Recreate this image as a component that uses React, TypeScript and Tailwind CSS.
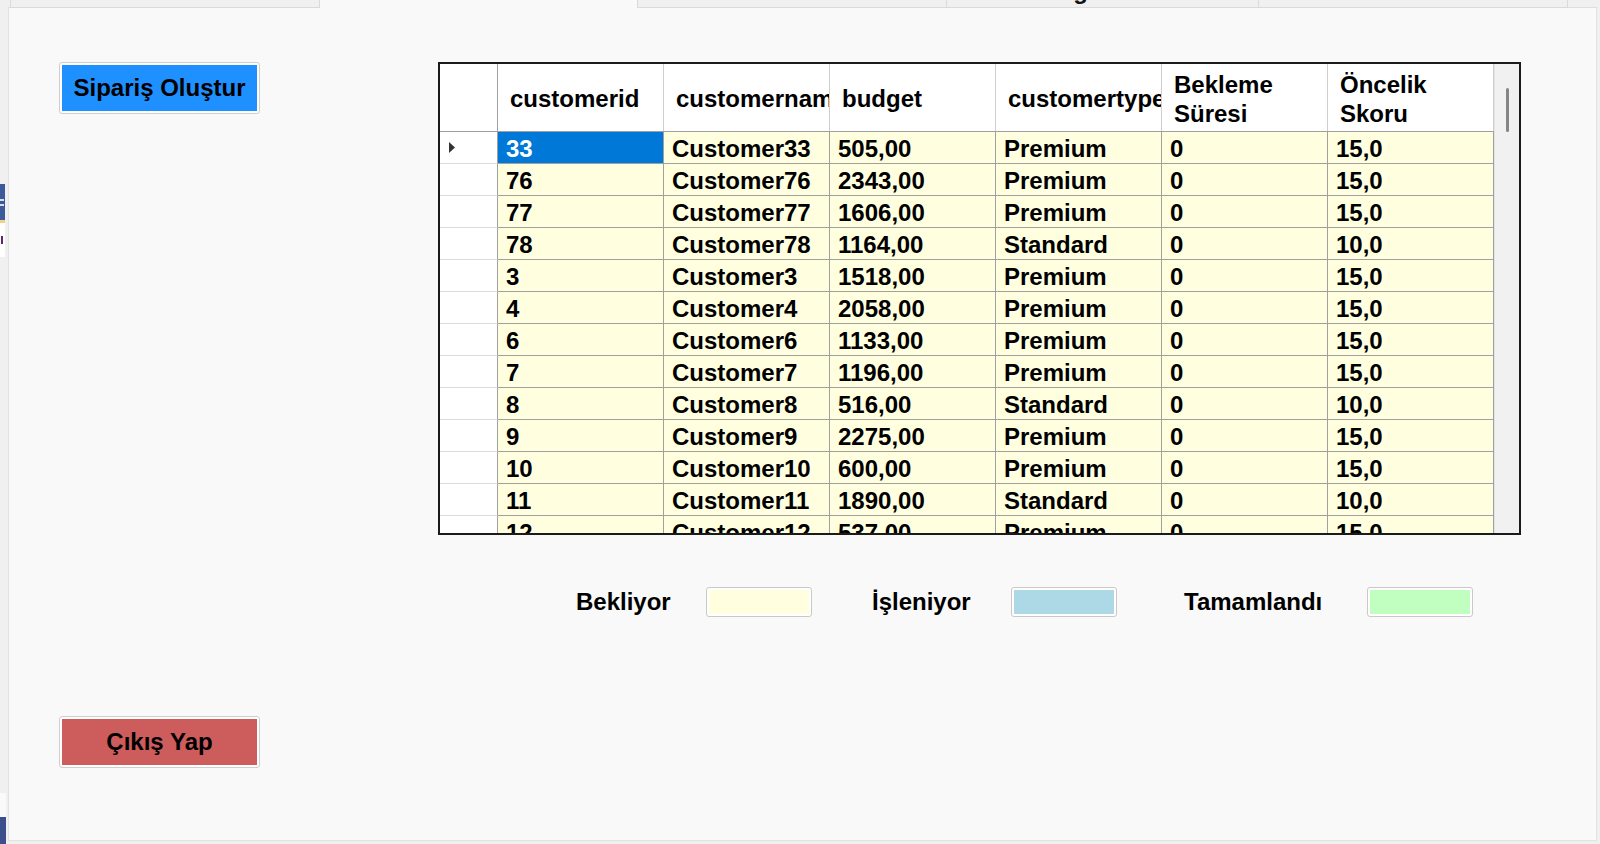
import React from "react";

const rows: string[][] = [
  ["33", "Customer33", "505,00", "Premium", "0", "15,0"],
  ["76", "Customer76", "2343,00", "Premium", "0", "15,0"],
  ["77", "Customer77", "1606,00", "Premium", "0", "15,0"],
  ["78", "Customer78", "1164,00", "Standard", "0", "10,0"],
  ["3", "Customer3", "1518,00", "Premium", "0", "15,0"],
  ["4", "Customer4", "2058,00", "Premium", "0", "15,0"],
  ["6", "Customer6", "1133,00", "Premium", "0", "15,0"],
  ["7", "Customer7", "1196,00", "Premium", "0", "15,0"],
  ["8", "Customer8", "516,00", "Standard", "0", "10,0"],
  ["9", "Customer9", "2275,00", "Premium", "0", "15,0"],
  ["10", "Customer10", "600,00", "Premium", "0", "15,0"],
  ["11", "Customer11", "1890,00", "Standard", "0", "10,0"],
  ["12", "Customer12", "537,00", "Premium", "0", "15,0"],
];

const headers: string[][] = [
  ["customerid"],
  ["customername"],
  ["budget"],
  ["customertype"],
  ["Bekleme", "Süresi"],
  ["Öncelik", "Skoru"],
];

function Swatch({ color }: { color: string }) {
  return (
    <div className="w-[106px] h-[30px] rounded-[3px] border border-[#c9c9c9] bg-white p-[2px] box-border">
      <div className={`w-full h-full ${color}`} />
    </div>
  );
}

export default function App() {
  return (
    <div className="w-[1600px] h-[844px] bg-[#f0f0f0] flex flex-row overflow-hidden font-['Liberation_Sans',Arial,sans-serif] font-bold text-[24px] text-black">
      {/* left strip: edge of another window */}
      <div className="w-[8px] h-full flex flex-col">
        <div className="h-[184px]" />
        <div className="w-[5px] h-[36px] bg-[#3d5a98] flex flex-col justify-center gap-[3px]">
          <div className="w-[4px] h-[2px] bg-white/80" />
          <div className="w-[4px] h-[2px] bg-white/80" />
        </div>
        <div className="w-[5px] h-[3px] bg-[#f1d28a]" />
        <div className="w-[5px] h-[34px] bg-white flex items-center">
          <div className="w-[3px] h-[8px] border-r-2 border-[#5b2a6e]" />
        </div>
        <div className="flex-1" />
        <div className="w-[6px] h-[24px] bg-[#fafafa]" />
        <div className="w-[6px] h-[27px] bg-[#3b4f8c]" />
      </div>

      <div className="w-[1592px] h-full flex flex-col">
        {/* tab strip */}
        <div className="h-[8px] flex flex-row">
          <div className="w-[2px] border-b border-[#dedede]" />
          <div className="w-[310px] bg-[#f0f0f0] border-l border-r border-b border-[#dadada]" />
          <div className="w-[317px] bg-[#f9f9f9]" />
          <div className="w-[310px] bg-[#f0f0f0] border-l border-r border-b border-[#dadada]" />
          <div className="w-[312px] bg-[#f0f0f0] border-r border-b border-[#dadada] overflow-hidden pl-[97px]">
            <div className="leading-none mt-[-21px] whitespace-nowrap text-[#111]">Loglar</div>
          </div>
          <div className="w-[309px] bg-[#f0f0f0] border-r border-b border-[#dadada]" />
          <div className="w-[29px] border-b border-[#dedede]" />
        </div>

        {/* panel */}
        <div className="w-[1589px] h-[833px] bg-[#f9f9f9] border-l border-r border-b border-[#e2e2e2] box-border flex flex-row">
          {/* left buttons */}
          <div className="ml-[50px] w-[201px] flex flex-col pt-[54px]">
            <div className="h-[52px] rounded-[3px] border border-[#cfcfcf] bg-white p-[2px] box-border">
              <div className="w-full h-full bg-[#1e90ff] flex items-center justify-center leading-none">
                Sipariş Oluştur
              </div>
            </div>
            <div className="mt-[602px] h-[52px] rounded-[3px] border border-[#cfcfcf] bg-white p-[2px] box-border">
              <div className="w-full h-full bg-[#cd5c5c] flex items-center justify-center leading-none">
                Çıkış Yap
              </div>
            </div>
          </div>

          {/* right: grid + legend */}
          <div className="ml-[178px] flex flex-col pt-[54px]">
            <div className="w-[1083px] h-[473px] border-2 border-[#1b1b1b] box-border bg-white flex flex-row overflow-hidden">
              <div className="w-[1054px] flex flex-col overflow-hidden">
                {/* header */}
                <div className="h-[68px] flex flex-row bg-white border-b border-[#a0a0a0] box-border shrink-0">
                  <div className="w-[58px] shrink-0 border-r border-[#a0a0a0] box-border" />
                  {headers.map((h, i) => (
                    <div
                      key={i}
                      className="w-[166px] shrink-0 border-r border-[#cfcfcf] box-border pl-[12px] pt-[2px] flex flex-col justify-center overflow-hidden leading-[29px] whitespace-nowrap"
                    >
                      {h.map((l, j) => (
                        <div key={j}>{l}</div>
                      ))}
                    </div>
                  ))}
                </div>
                {/* rows */}
                {rows.map((r, ri) => (
                  <div key={ri} className="h-[32px] flex flex-row shrink-0">
                    <div className="w-[58px] shrink-0 bg-white border-r border-[#a0a0a0] border-b border-b-[#dcdcdc] box-border flex items-center pl-[9px]">
                      {ri === 0 && (
                        <svg width="7" height="11" viewBox="0 0 7 11">
                          <path d="M0 0 L6 5.5 L0 11 Z" fill="#333" />
                        </svg>
                      )}
                    </div>
                    {r.map((c, ci) => (
                      <div
                        key={ci}
                        className={`w-[166px] shrink-0 border-r border-b border-[#a0a0a0] box-border pl-[8px] pt-[1px] leading-[31px] whitespace-nowrap overflow-hidden ${
                          ri === 0 && ci === 0 ? "bg-[#0078d7] text-white" : "bg-[#ffffe0]"
                        }`}
                      >
                        {c}
                      </div>
                    ))}
                  </div>
                ))}
              </div>
              {/* scrollbar */}
              <div className="w-[25px] bg-[#f1f1f1] border-l border-[#e4e4e4] box-border pt-[24px] flex justify-center">
                <div className="w-[3px] h-[44px] rounded-full bg-[#858585]" />
              </div>
            </div>

            {/* legend */}
            <div className="mt-[52px] ml-[138px] flex flex-row items-center">
              <div className="w-[130px] leading-none">Bekliyor</div>
              <Swatch color="bg-[#ffffe0]" />
              <div className="ml-[60px] w-[139px] leading-none">İşleniyor</div>
              <Swatch color="bg-[#add8e6]" />
              <div className="ml-[67px] w-[183px] leading-none">Tamamlandı</div>
              <Swatch color="bg-[#c0ffc0]" />
            </div>
          </div>
        </div>
      </div>
    </div>
  );
}
